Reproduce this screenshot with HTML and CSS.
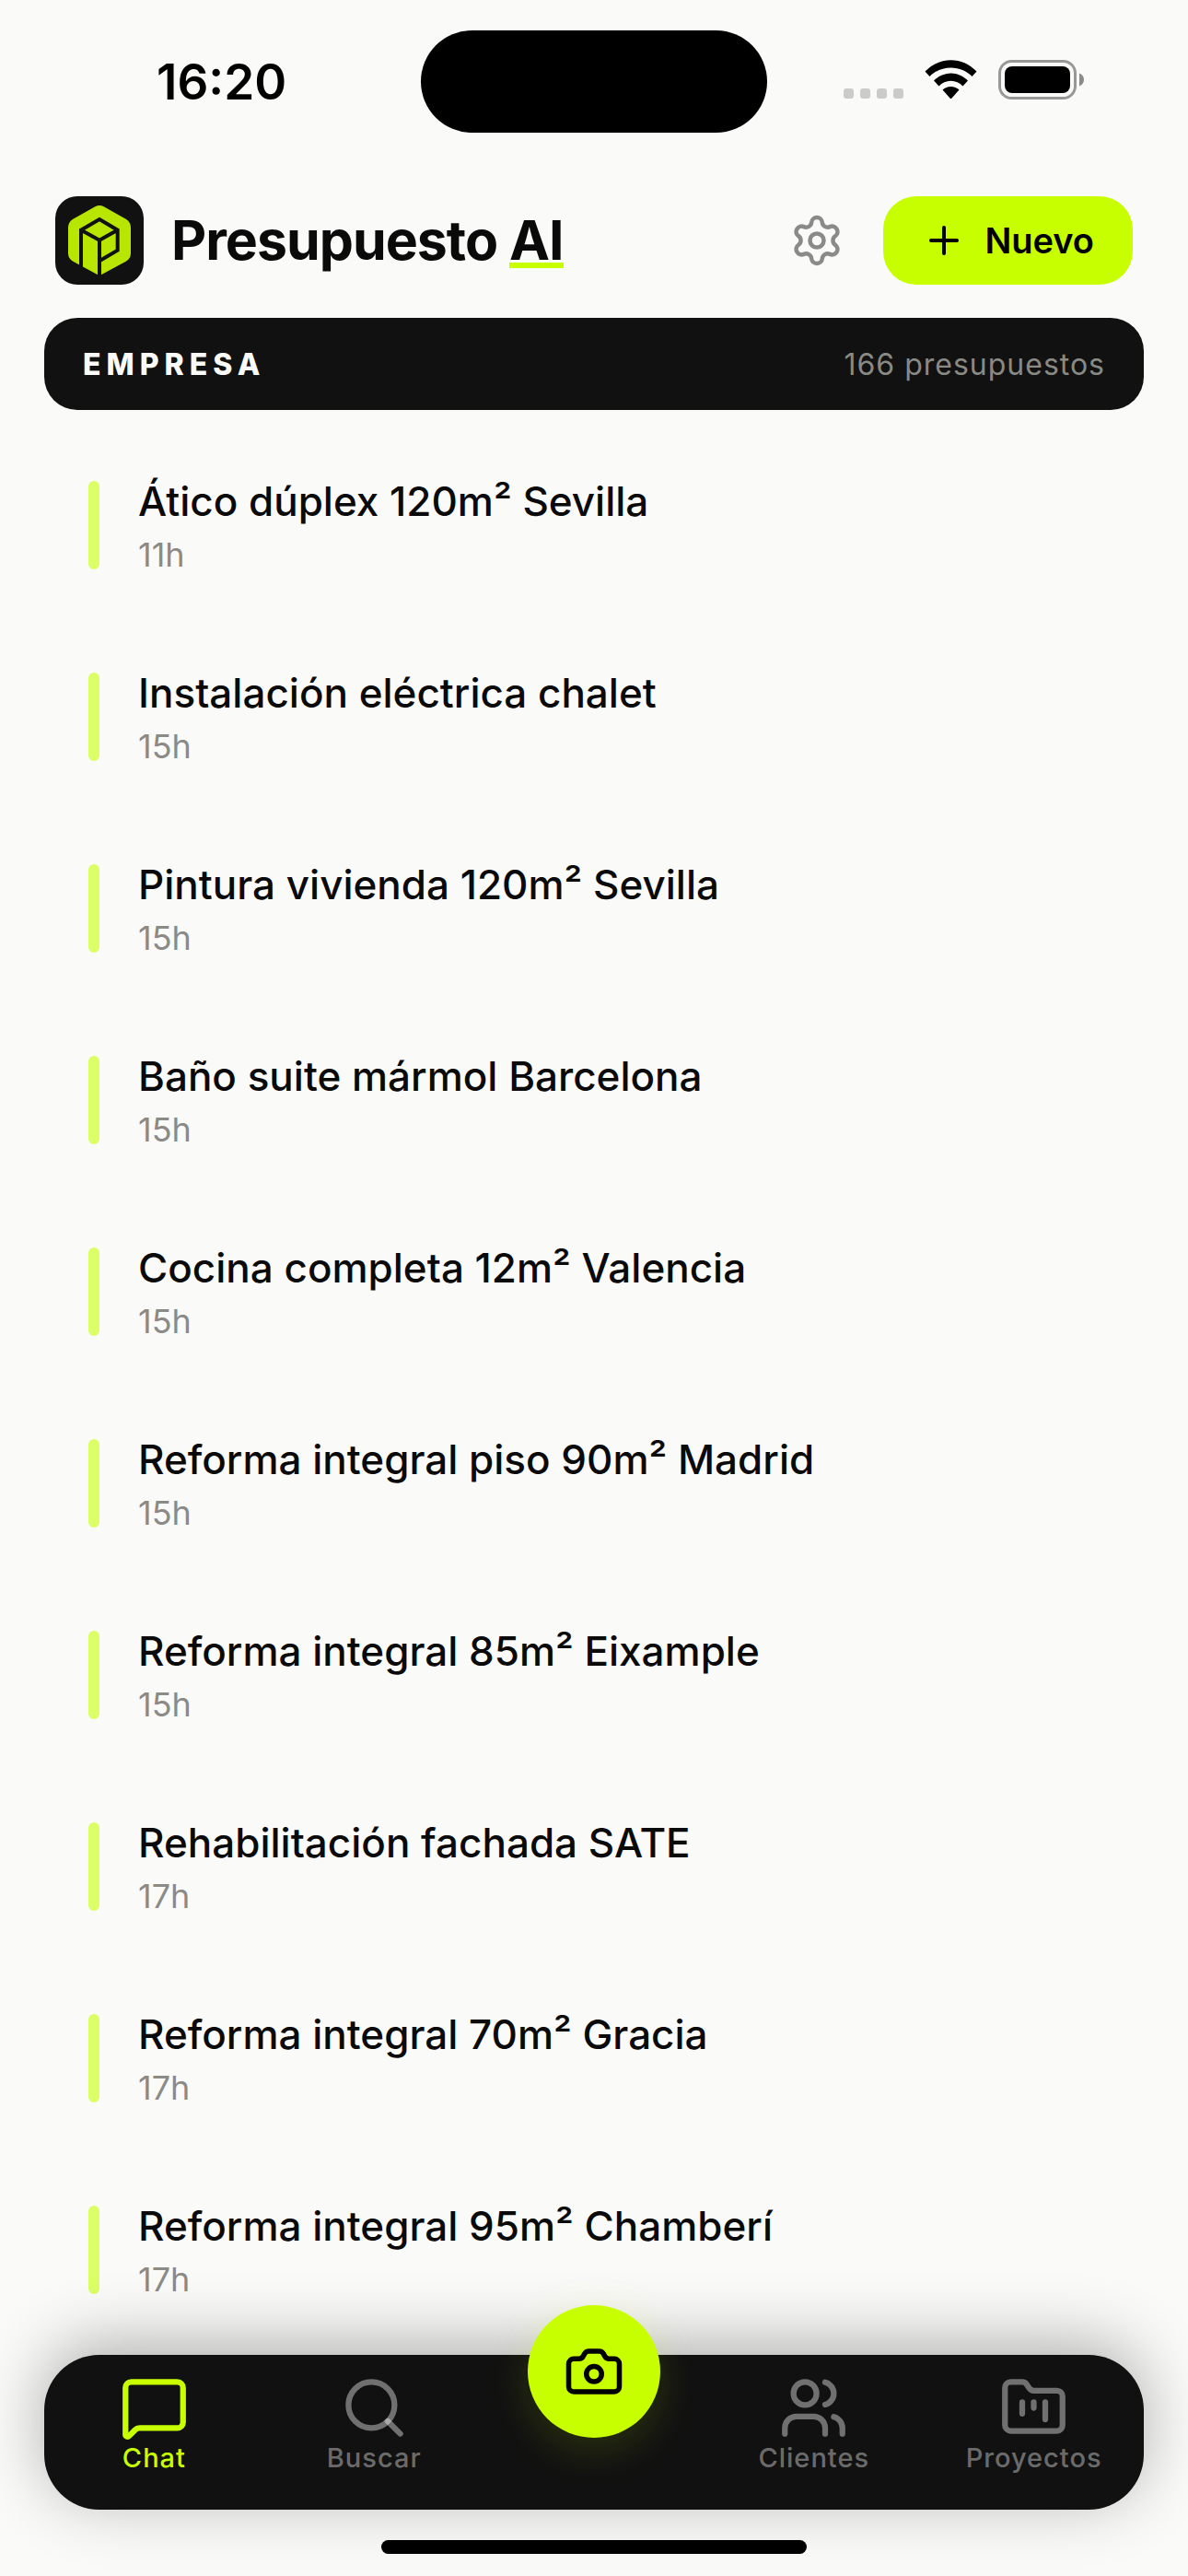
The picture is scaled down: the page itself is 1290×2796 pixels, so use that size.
FILE: index.html
```
<!DOCTYPE html>
<html lang="es">
<head>
	<meta charset="utf-8">
	<meta name="viewport" content="width=device-width, initial-scale=1">
	<title>Presupuesto AI</title>
	<link rel="stylesheet" href="styles.css">
</head>
<body>
	<div class="status-bar">
		<time class="clock">16:20</time>
		<div class="island"></div>
		<div class="status-icons">
			<svg width="65" height="43" viewBox="0 0 65 43" fill="#cbcbca">
				<rect x="0" y="31" width="11" height="11" rx="3"/>
				<rect x="18" y="31" width="11" height="11" rx="3"/>
				<rect x="36" y="31" width="11" height="11" rx="3"/>
				<rect x="54" y="31" width="11" height="11" rx="3"/>
			</svg>
			<svg width="57" height="43" viewBox="0 0 57 43">
				<path d="M0.5 12.5C8.500 4.500 18 0.300 28.500 0.300S48.500 4.500 56.500 12.500L51.500 18C45.500 12 37.500 8.500 28.500 8.500S11.500 12 5.500 18Z"/>
				<path d="M10 22.500C15 17.500 21.500 14.500 28.500 14.500S42 17.500 47 22.500L41.500 28.500C38 25 33.500 22.800 28.500 22.800S19 25 15.500 28.500Z"/>
				<path d="M19.500 32.500C22 30.300 25 29 28.500 29S35 30.300 37.500 32.500L29.500 41.500Q28.500 42.500 27.500 41.500Z"/>
			</svg>
			<svg width="93" height="43" viewBox="0 0 93 43">
				<rect x="1.500" y="1.500" width="82" height="40" rx="13" fill="none" stroke="#989897" stroke-width="3"/>
				<rect x="7" y="7" width="71" height="29" rx="8"/>
				<path d="M88 14.500C91.500 16 93 18.500 93 21.500S91.500 27 88 28.500Z" fill="#8b8b8a"/>
			</svg>
		</div>
	</div>

	<header class="header">
		<svg class="logo" viewBox="60 39 288 288">
			<rect x="60" y="39" width="288" height="288" rx="72" fill="#111"/>
			<path d="M190 73Q204 65 218 73L290 113Q306 123 306 141V224Q306 242 290 251L204 298L118 251Q102 242 102 224V141Q102 123 118 113Z" fill="#b8e600"/>
			<path d="M144 280V149L204 114L263 149V215L205 249M144 149L204 182L263 149M204 182V304" fill="none" stroke="#111" stroke-width="12"/>
		</svg>
		<h1 class="title">Presupuesto <span class="mark">AI</span></h1>
		<button class="settings" aria-label="Ajustes">
			<svg class="icon" width="60" height="60" viewBox="0 0 24 24">
				<path d="M9.671 4.136a2.34 2.34 0 0 1 4.659 0 2.34 2.34 0 0 0 3.319 1.915 2.34 2.34 0 0 1 2.33 4.033 2.34 2.34 0 0 0 0 3.831 2.34 2.34 0 0 1-2.33 4.033 2.34 2.34 0 0 0-3.319 1.915 2.34 2.34 0 0 1-4.659 0 2.34 2.34 0 0 0-3.32-1.915 2.34 2.34 0 0 1-2.33-4.033 2.34 2.34 0 0 0 0-3.831A2.34 2.34 0 0 1 6.35 6.051a2.34 2.34 0 0 0 3.319-1.915"/>
				<circle cx="12" cy="12" r="3"/>
			</svg>
		</button>
		<button class="new">
			<svg class="icon" width="48" height="48" viewBox="0 0 24 24"><path d="M5 12h14M12 5v14"/></svg>
			Nuevo
		</button>
	</header>

	<main class="main">
		<section class="company">
			<h2>EMPRESA</h2>
			<span>166 presupuestos</span>
		</section>

		<ul class="quotes">
			<li><a href="#"><strong>Ático dúplex 120m² Sevilla</strong><small>11h</small></a></li>
			<li><a href="#"><strong>Instalación eléctrica chalet</strong><small>15h</small></a></li>
			<li><a href="#"><strong>Pintura vivienda 120m² Sevilla</strong><small>15h</small></a></li>
			<li><a href="#"><strong>Baño suite mármol Barcelona</strong><small>15h</small></a></li>
			<li><a href="#"><strong>Cocina completa 12m² Valencia</strong><small>15h</small></a></li>
			<li><a href="#"><strong>Reforma integral piso 90m² Madrid</strong><small>15h</small></a></li>
			<li><a href="#"><strong>Reforma integral 85m² Eixample</strong><small>15h</small></a></li>
			<li><a href="#"><strong>Rehabilitación fachada SATE</strong><small>17h</small></a></li>
			<li><a href="#"><strong>Reforma integral 70m² Gracia</strong><small>17h</small></a></li>
			<li><a href="#"><strong>Reforma integral 95m² Chamberí</strong><small>17h</small></a></li>
		</ul>
	</main>

	<nav class="tabs">
		<a class="tab active" href="#">
			<svg class="icon" width="75" height="75" viewBox="0 0 24 24">
				<path d="M22 17a2 2 0 0 1-2 2H6.828a2 2 0 0 0-1.414.586l-2.202 2.202A.71.71 0 0 1 2 21.286V5a2 2 0 0 1 2-2h16a2 2 0 0 1 2 2z"/>
			</svg>
			Chat
		</a>
		<a class="tab" href="#">
			<svg class="icon" width="75" height="75" viewBox="0 0 24 24">
				<path d="m21 21-4.340-4.340"/>
				<circle cx="11" cy="11" r="8"/>
			</svg>
			Buscar
		</a>
		<button class="camera" aria-label="Cámara">
			<svg class="icon" width="66" height="66" viewBox="0 0 24 24">
				<path d="M13.997 4a2 2 0 0 1 1.760 1.050l.486.900A2 2 0 0 0 18.003 7H20a2 2 0 0 1 2 2v9a2 2 0 0 1-2 2H4a2 2 0 0 1-2-2V9a2 2 0 0 1 2-2h1.997a2 2 0 0 0 1.759-1.048l.489-.904A2 2 0 0 1 10.004 4z"/>
				<circle cx="12" cy="13" r="3"/>
			</svg>
		</button>
		<a class="tab" href="#">
			<svg class="icon" width="75" height="75" viewBox="0 0 24 24">
				<path d="M16 21v-2a4 4 0 0 0-4-4H6a4 4 0 0 0-4 4v2"/>
				<path d="M16 3.128a4 4 0 0 1 0 7.744"/>
				<path d="M22 21v-2a4 4 0 0 0-3-3.870"/>
				<circle cx="9" cy="7" r="4"/>
			</svg>
			Clientes
		</a>
		<a class="tab" href="#">
			<svg class="icon" width="75" height="75" viewBox="0 0 24 24">
				<path d="M4 20h16a2 2 0 0 0 2-2V8a2 2 0 0 0-2-2h-7.930a2 2 0 0 1-1.660-.900l-.820-1.200A2 2 0 0 0 7.930 3H4a2 2 0 0 0-2 2v13c0 1.100.900 2 2 2Z"/>
				<path d="M8 10v4"/>
				<path d="M12 10v2"/>
				<path d="M16 10v6"/>
			</svg>
			Proyectos
		</a>
	</nav>
	<div class="home-indicator"></div>
</body>
</html>
```
FILE: styles.css
```
* {
	box-sizing: border-box;
}

body {
	display: flex;
	flex-direction: column;
	min-height: 100vh;
	margin: 0;
	color: #0a0a0a;
	font-family: Inter, 'Liberation Sans', sans-serif;
	background: #fafaf8;
}

a {
	color: inherit;
	text-decoration: none;
}

button {
	padding: 0;
	border: 0;
	color: #000;
	font-family: inherit;
	background: none;
}

.icon {
	flex: none;
	fill: none;
	stroke: currentColor;
	stroke-width: 2;
	stroke-linecap: round;
	stroke-linejoin: round;
}

/* status bar */
.status-bar {
	display: grid;
	grid-template-columns: 1fr 376px 1fr;
	align-items: center;
	padding-top: 33px;
	color: #000;
}

.clock {
	padding-left: 170px;
	font-size: 53px;
	font-weight: 600;
}

.island {
	height: 111px;
	border-radius: 56px;
	background: #000;
}

.status-icons {
	display: flex;
	justify-content: flex-end;
	gap: 23px;
	padding: 0 113px 4px 0;
}

/* header */
.header {
	display: flex;
	align-items: center;
	padding: 69px 60px 36px;
}

.logo {
	flex: none;
	width: 96px;
	height: 96px;
}

.title {
	flex: 1;
	margin: 0 0 0 30px;
	font-size: 59px;
	line-height: 72px;
	font-weight: 700;
	letter-spacing: -1px;
}

.mark {
	display: inline-block;
	height: 66px;
	border-bottom: 6px solid #c8ff00;
}

.settings {
	display: flex;
	margin-right: 42px;
	color: #8a8a87;
}

.settings .icon {
	stroke-width: 1.8;
}

.new {
	display: flex;
	align-items: center;
	gap: 20px;
	height: 96px;
	padding: 0 42px;
	border-radius: 36px;
	font-size: 38px;
	font-weight: 600;
	background: #c8ff00;
}

/* list */
.main {
	padding: 0 48px;
}

.company {
	display: flex;
	justify-content: space-between;
	align-items: center;
	height: 100px;
	padding: 0 42px;
	border-radius: 36px;
	color: #8a8a85;
	font-size: 32px;
	letter-spacing: 1px;
	background: #111;
}

.company h2 {
	margin: 0;
	color: #fafaf8;
	font-size: 32px;
	font-weight: 800;
	letter-spacing: 6px;
}

.quotes {
	margin: 0;
	padding: 21px 48px 0;
	list-style: none;
}

.quotes li {
	padding: 56px 0;
}

.quotes a {
	display: flex;
	flex-direction: column;
	position: relative;
	height: 96px;
	padding-left: 54px;
}

.quotes a::before {
	content: "";
	position: absolute;
	top: 0;
	bottom: 0;
	left: 0;
	width: 12px;
	border-radius: 6px;
	background: #dcff66;
}

.quotes strong {
	font-size: 44px;
	line-height: 44px;
	font-weight: 500;
}

.quotes small {
	margin-top: 14px;
	color: #8a8a87;
	font-size: 36px;
	line-height: 44px;
}

/* bottom tabs */
.tabs {
	display: grid;
	grid-template-columns: repeat(5, 1fr);
	position: relative;
	height: 168px;
	margin: auto 48px 0;
	border-radius: 60px;
	background: #111;
	box-shadow: 0 -12px 72px rgba(0, 0, 0, 0.3);
}

.tab {
	display: flex;
	flex-direction: column;
	align-items: center;
	padding-top: 20px;
	color: rgba(255, 255, 255, 0.4);
	font-size: 29px;
	line-height: 34px;
	font-weight: 500;
	letter-spacing: 1px;
}

.tab.active {
	color: #c8ff00;
}

.camera {
	display: flex;
	justify-content: center;
	align-items: center;
	justify-self: center;
	width: 144px;
	height: 144px;
	margin-top: -54px;
	border-radius: 50%;
	background: #c8ff00;
	box-shadow: 0 12px 48px rgba(200, 255, 0, 0.15);
}

.home-indicator {
	position: relative;
	width: 462px;
	height: 15px;
	margin: 33px auto 24px;
	border-radius: 8px;
	background: #000;
}
```
